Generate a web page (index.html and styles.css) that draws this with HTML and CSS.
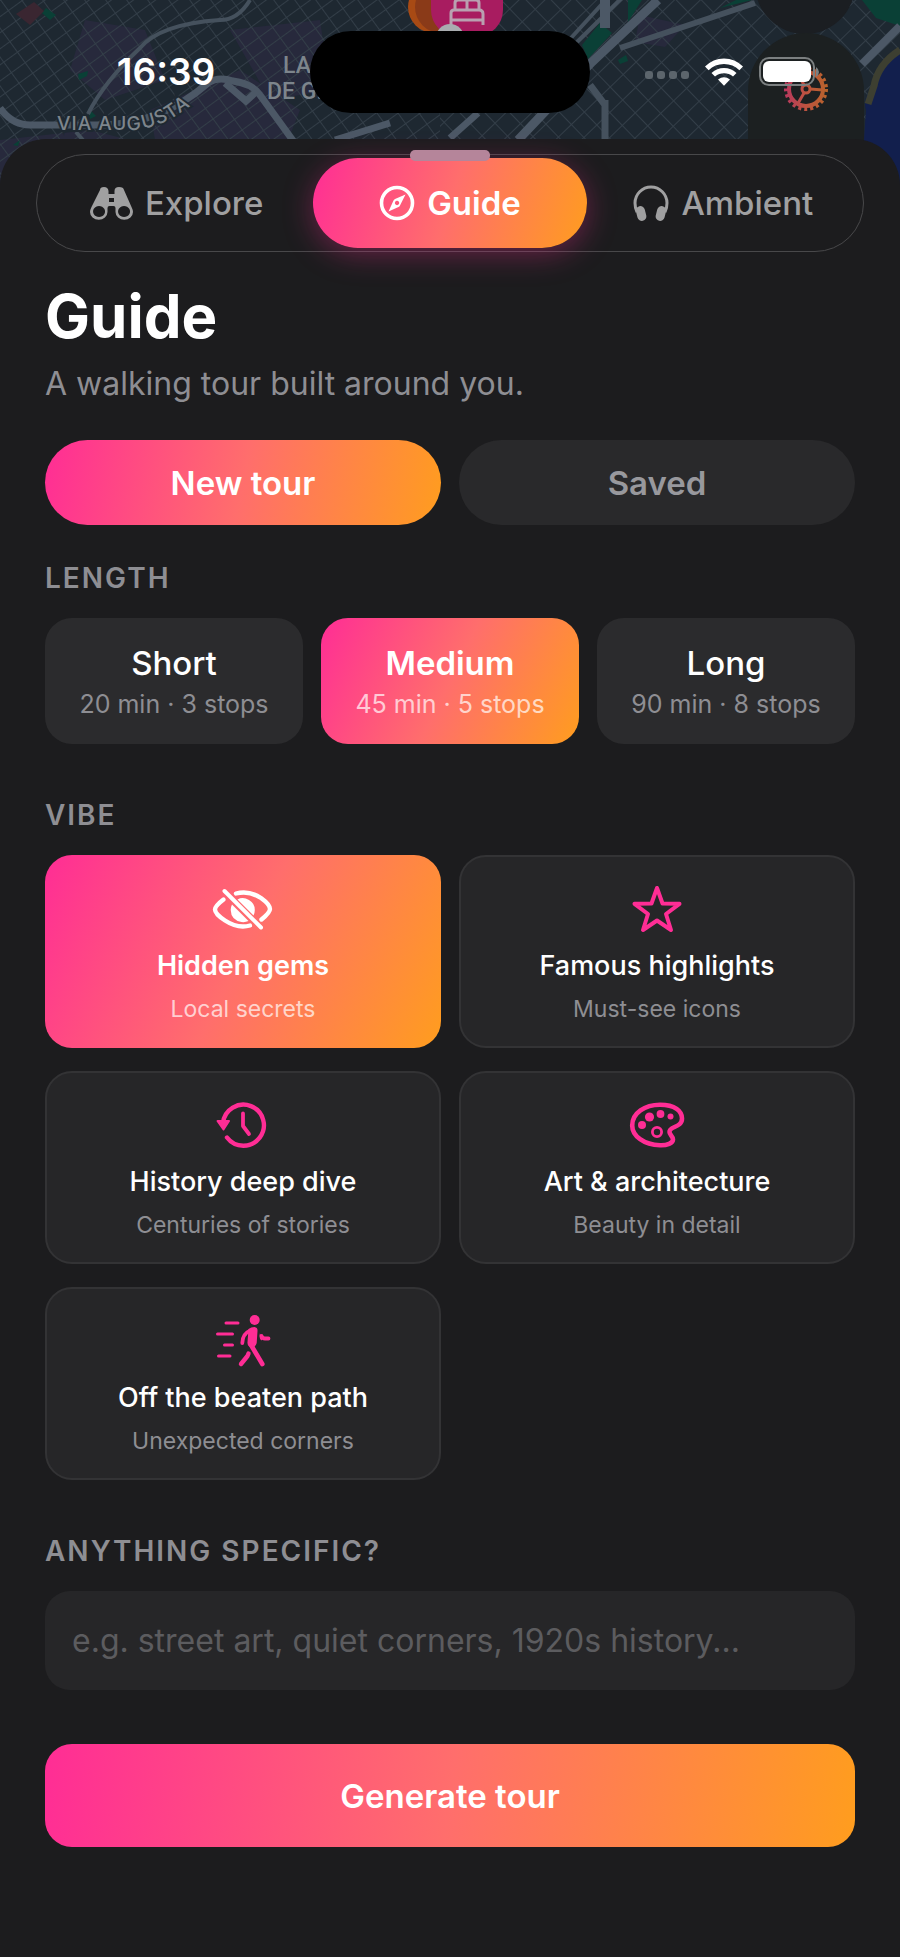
FILE: index.html
```
<!DOCTYPE html>
<html lang="en">

<head>
    <meta charset="UTF-8">
    <meta name="viewport" content="width=device-width, initial-scale=1.0">
    <title>Guide</title>
    <link rel="stylesheet" href="styles.css">
</head>

<body>
    <div class="screen">
        <!-- dimmed city map behind the sheet -->
        <svg class="map" viewBox="0 0 900 200" preserveAspectRatio="xMidYMin slice" aria-hidden="true">
            <defs>
                <pattern id="streets-left" width="17" height="13" patternUnits="userSpaceOnUse" patternTransform="rotate(-36)">
                    <path d="M0 0H17M0 0V13" stroke="#333e48" stroke-width="2" fill="none" />
                </pattern>
                <pattern id="streets-right" width="18" height="18" patternUnits="userSpaceOnUse" patternTransform="rotate(-44)">
                    <path d="M0 0H18M0 0V18" stroke="#333e48" stroke-width="2" fill="none" />
                </pattern>
                <linearGradient id="gear-fill" gradientUnits="userSpaceOnUse" x1="784" y1="0" x2="828" y2="0">
                    <stop offset="0" stop-color="#b8375f" />
                    <stop offset="0.5" stop-color="#bd5340" />
                    <stop offset="1" stop-color="#b8632a" />
                </linearGradient>
            </defs>
            <rect width="900" height="200" fill="#1e2831" />
            <g fill="#2b2a42" opacity="0.7">
                <path d="M85 20l60 10 20 50-60 20-35-30z" />
                <path d="M150 110l90-40 60 40-20 50-120 10z" />
                <path d="M230 30l90-10 10 70-60 10z" />
                <path d="M0 140l90-10 80 20-30 50H0z" />
                <path d="M640 15l45 10-20 22-30-5z" />
            </g>
            <rect width="440" height="200" fill="url(#streets-left)" />
            <rect x="440" width="460" height="200" fill="url(#streets-right)" />
            <g fill="#0a4036">
                <path d="M46 8l10 7-6 5-8-7z" />
                <path d="M78 74l10-3-1 5-8 4z" />
                <path d="M88 108l8 8-6 3z" />
                <path d="M13 145l7-5-2 6z" />
                <path d="M582 45l18-22 12 10-24 26z" />
                <path d="M628 0h14l-14 22z" />
                <path d="M720 8l16-8h16z" />
                <path d="M862 0h38v26l-24-8z" />
                <path d="M618 60l8-5 2 6-8 3z" />
            </g>
            <path d="M16 14l18-12 10 9-14 14z" fill="#3a2631" />
            <g fill="none" stroke="#45515d" stroke-width="4">
                <path d="M250 0q-12 20-30 20-60 4-80 28-36 34-52 66" />
                <path d="M620 48L755 3" stroke-width="6" />
                <path d="M560 50L602 4M575 44L640 -20" />
                <path d="M590 85l15 20M605 100v40" stroke-width="7" />
                <path d="M76 132l12 14" />
            </g>
            <g fill="none" stroke="#4c5866" stroke-width="7">
                <path d="M0 108q12 17 30 17h70q60 0 108-42 10-7 25-2 20 3 27 14l34 47" />
                <path d="M225 83l21 18 11-10" />
                <path d="M605 0v28" stroke-width="10" />
                <path d="M658 0L592 62 518 140" stroke-width="9" />
                <path d="M335 140l55-17" />
                <path d="M450 138l28-25" />
                <path d="M862 64l38-38" stroke-width="8" />
            </g>
            <path d="M900 50q-22 14-26 36-12 12-8 24l-6 90h40z" fill="#121f4d" />
            <path d="M900 50q-22 14-26 36l-6 18" fill="none" stroke="#3d3f31" stroke-width="7" />
            <circle cx="805" cy="-16" r="50" fill="#1b1e22" />
            <rect x="748" y="33" width="116" height="180" rx="58" fill="#1c2021" />
            <g fill="none" stroke="url(#gear-fill)">
                <circle cx="806" cy="89" r="17" stroke-width="4" />
                <circle cx="806" cy="89" r="20" stroke-width="4" stroke-dasharray="3 3" />
                <circle cx="806" cy="89" r="4" stroke-width="3" />
                <path d="M810 89l13 1M804 93l-7 12M804 85l-6-11" stroke-width="3" />
            </g>
            <circle cx="434" cy="7" r="26" fill="#a84a14" />
            <circle cx="441" cy="7" r="26" fill="#8a3a18" />
            <rect x="431" y="-40" width="72" height="76" rx="26" fill="#a81c60" />
            <g fill="none" stroke="#b9a0b0" stroke-width="3">
                <path d="M451 25V13q0-3 3-3h25q4 0 4 4v11M451 20h32" />
                <path d="M455 9V3q0-3 3-3h18q3 0 3 3v6M467 1v8" />
            </g>
            <circle cx="450" cy="38" r="14" fill="#a9adb0" />
            <g class="map-label">
                <text x="283" y="73">LA</text>
                <text x="267" y="99">DE G.</text>
            </g>
            <path id="augusta" d="M57 130H135Q158 127 174 117L215 90" fill="none" />
            <text class="map-road"><textPath href="#augusta">VIA AUGUSTA</textPath></text>
        </svg>

        <header class="status-bar">
            <span class="time">16:39</span>
            <div class="island"></div>
            <div class="status-icons">
                <svg width="46" height="24" viewBox="0 0 46 24" fill="#5c656c" aria-hidden="true">
                    <rect x="1" y="11" width="8" height="8" rx="3" />
                    <rect x="13" y="11" width="8" height="8" rx="3" />
                    <rect x="25" y="11" width="8" height="8" rx="3" />
                    <rect x="37" y="11" width="8" height="8" rx="3" />
                </svg>
                <svg width="38" height="28" viewBox="0 0 38 28" fill="#fff" aria-label="Wi-Fi">
                    <path d="M0 8.600Q8 .5 19 .5T38 8.600L34.400 12.200Q28 6 19 6T3.600 12.200z" />
                    <path d="M6.500 15Q12 10 19 10T31.500 15L28 18.600Q24 15.300 19 15.300T10 18.600z" />
                    <path d="M13 21.500Q19 17 25 21.500L19 27.800z" />
                </svg>
                <svg width="62" height="30" viewBox="0 0 62 30" aria-label="Battery">
                    <rect x="2" y="1" width="54" height="27" rx="9" fill="none" stroke="#7b7f80" stroke-width="2" />
                    <rect x="5" y="4" width="48" height="21" rx="6" fill="#fff" />
                    <path d="M58 10q3 2 3 5t-3 5z" fill="#7b7f80" />
                </svg>
            </div>
        </header>

        <main class="sheet">
            <div class="grabber"></div>

            <nav class="tabs">
                <button class="tab" type="button">
                    <svg width="43" height="34" viewBox="0 0 43 34" aria-hidden="true">
                        <path fill="currentColor" fill-rule="evenodd" d="M10 4Q10 1 14 1t4.500 4v3h6V5Q24.500 1 29 1t5 3l7.500 17q1.500 3 1.500 5a8.500 7.500 0 0 1-17.500 0V22q0-2-2-2h-4q-2 0-2 2v4A8.500 7.500 0 0 1 0 26q0-2 1.500-5zM19 12v4h5v-4zM9 20a6 5.500 0 1 0 .1 0zM34 20a6 5.500 0 1 0 .1 0z" />
                    </svg>
                    Explore
                </button>
                <button class="tab active" type="button" aria-current="page">
                    <svg width="36" height="36" viewBox="0 0 36 36" aria-hidden="true">
                        <circle cx="18" cy="18" r="15.500" fill="none" stroke="currentColor" stroke-width="3.600" />
                        <path fill="currentColor" fill-rule="evenodd" d="M26.500 9.500L21 20.500q-.5 1-1.500 1.500L9.500 26.500 14.500 15.500q.5-1 1.500-1.500zM18 15.800a2.200 2.200 0 1 0 .1 0z" />
                    </svg>
                    Guide
                </button>
                <button class="tab" type="button">
                    <svg width="36" height="36" viewBox="0 0 36 36" aria-hidden="true">
                        <path d="M4 27Q2 23 2 18a16 16 0 0 1 32 0q0 5-2 9" fill="none" stroke="currentColor" stroke-width="3" />
                        <rect x="3.500" y="21" width="9" height="15" rx="4.500" fill="currentColor" transform="rotate(-14 8 28)" />
                        <rect x="23.500" y="21" width="9" height="15" rx="4.500" fill="currentColor" transform="rotate(14 28 28)" />
                    </svg>
                    Ambient
                </button>
            </nav>

            <div class="content">
                <h1>Guide</h1>
                <p class="subtitle">A walking tour built around you.</p>

                <div class="switch">
                    <button class="switch-button active" type="button">New tour</button>
                    <button class="switch-button" type="button">Saved</button>
                </div>

                <h2 class="label">LENGTH</h2>
                <div class="lengths">
                    <button class="length" type="button">
                        <span class="length-name">Short</span>
                        <span class="length-info">20 min · 3 stops</span>
                    </button>
                    <button class="length active" type="button">
                        <span class="length-name">Medium</span>
                        <span class="length-info">45 min · 5 stops</span>
                    </button>
                    <button class="length" type="button">
                        <span class="length-name">Long</span>
                        <span class="length-info">90 min · 8 stops</span>
                    </button>
                </div>

                <h2 class="label section">VIBE</h2>
                <div class="vibes">
                    <button class="vibe active" type="button">
                        <svg class="vibe-icon" viewBox="0 0 60 50" aria-hidden="true">
                            <g fill="none" stroke="currentColor" stroke-width="4.400" stroke-linecap="round">
                                <path d="M10.500 15.500Q2 22 2 25.500 2 30 12 36.500 25 45 37 41.500" />
                                <path d="M23 9.500Q36 6 48 14 57 20.500 57 25 57 28.500 48.500 35.500" />
                                <path d="M11.500 7L48 43.500" stroke-width="4" />
                            </g>
                            <path fill="currentColor" d="M19 20.500L35.500 37Q32 38.600 28.500 38 18 36 17.700 26 17.700 23 19 20.500zM24.500 15.500Q30 12.500 36 16 42 19.500 41.800 26 41.800 29 40.500 31.500z" />
                        </svg>
                        <span class="vibe-name">Hidden gems</span>
                        <span class="vibe-info">Local secrets</span>
                    </button>
                    <button class="vibe" type="button">
                        <svg class="vibe-icon" viewBox="0 0 60 50" aria-hidden="true">
                            <path d="M30 4l5.500 15.500 17 .3-13.500 10.200 5 16L30 36.500 16 46l5-16L7.500 19.800l17-.3z" fill="none" stroke="currentColor" stroke-width="4" stroke-linejoin="round" />
                        </svg>
                        <span class="vibe-name">Famous highlights</span>
                        <span class="vibe-info">Must-see icons</span>
                    </button>
                    <button class="vibe" type="button">
                        <svg class="vibe-icon" viewBox="0 0 60 50" aria-hidden="true">
                            <g fill="none" stroke="currentColor" stroke-width="4.400" stroke-linecap="round" stroke-linejoin="round">
                                <path d="M10 23A20.500 20.500 0 1 1 14 37.500" />
                                <path d="M30 13.500V26l6 8" stroke-width="3.800" />
                            </g>
                            <path d="M4.500 21h11.500l-5.500 8.500z" fill="currentColor" stroke="currentColor" stroke-width="2" stroke-linejoin="round" />
                        </svg>
                        <span class="vibe-name">History deep dive</span>
                        <span class="vibe-info">Centuries of stories</span>
                    </button>
                    <button class="vibe" type="button">
                        <svg class="vibe-icon" viewBox="0 0 60 50" aria-hidden="true">
                            <path d="M33 4.800C48 4.800 55 11 55 18.500 55 28 42 26 42.500 32 42.500 35 46 36 46 39.500 46 43 40 45.500 33 45.200 17 45 5.200 36 5.200 25.500 5.200 13 18 4.800 33 4.800z" fill="none" stroke="currentColor" stroke-width="4.600" />
                            <g fill="currentColor">
                                <circle cx="15" cy="25" r="4" />
                                <circle cx="22.500" cy="17" r="4.600" />
                                <circle cx="33.500" cy="14" r="3.900" />
                                <circle cx="43.500" cy="16.500" r="3" />
                            </g>
                            <circle cx="30" cy="32" r="4.600" fill="none" stroke="currentColor" stroke-width="2.800" />
                        </svg>
                        <span class="vibe-name">Art &amp; architecture</span>
                        <span class="vibe-info">Beauty in detail</span>
                    </button>
                    <button class="vibe" type="button">
                        <svg class="vibe-icon" viewBox="0 0 60 50" aria-hidden="true">
                            <g fill="none" stroke="currentColor" stroke-linecap="round" stroke-linejoin="round">
                                <path d="M13 7h12M4.500 18h15M11.500 29h8M5.500 40h11.500" stroke-width="3" />
                                <path d="M36.500 15Q29.500 18 29.300 27" stroke-width="3.800" />
                                <path d="M48.500 20q1 2.500 3.500 2.500h3.500" stroke-width="3.800" />
                                <path d="M38 29l3 5 8.300 14" stroke-width="4.600" />
                                <path d="M35.500 37.500l-1 2.500-6.500 8" stroke-width="4.400" />
                            </g>
                            <path d="M35.500 13Q38 11 41.500 11 44.800 11.500 44.500 15L43.700 27Q43 31 39 31.500 34 31 34.500 26z" fill="currentColor" />
                            <path d="M46.700 17.500l4 4-2 3q-2-1-2-3z" fill="currentColor" />
                            <circle cx="41.700" cy="4" r="5" fill="currentColor" />
                        </svg>
                        <span class="vibe-name">Off the beaten path</span>
                        <span class="vibe-info">Unexpected corners</span>
                    </button>
                </div>

                <label class="label section" for="specific">ANYTHING SPECIFIC?</label>
                <input class="specific" type="text" id="specific" placeholder="e.g. street art, quiet corners, 1920s history...">

                <button class="generate" type="button">Generate tour</button>
            </div>
        </main>
    </div>
</body>

</html>
```
FILE: styles.css
```
* {
    box-sizing: border-box;
}

body {
    margin: 0;
    background-color: #1c1c1e;
    color: #fff;
    font-family: Inter, "Liberation Sans", sans-serif;
}

button {
    border: none;
    margin: 0;
    padding: 0;
    background: none;
    color: inherit;
    font-family: inherit;
    cursor: pointer;
}

.screen {
    position: relative;
    min-height: 100vh;
    display: flex;
    flex-direction: column;
}

.map {
    position: absolute;
    top: 0;
    left: 0;
    width: 100%;
    height: 200px;
}

.map-label {
    fill: #7d858c;
    font-family: Roboto, sans-serif;
    font-size: 23px;
    font-weight: 500;
}

.map-road {
    fill: #7d858c;
    stroke: #1e2831;
    stroke-width: 4px;
    paint-order: stroke;
    font-size: 19px;
    font-weight: 500;
    letter-spacing: 1px;
}

.status-bar {
    position: relative;
    display: grid;
    grid-template-columns: 1fr 280px 1fr;
    align-items: center;
    padding: 31px 0 26px;
}

.time {
    padding-left: 22px;
    text-align: center;
    font-size: 37px;
    font-weight: 600;
    line-height: 44px;
}

.island {
    height: 82px;
    border-radius: 41px;
    background-color: #000;
}

.status-icons {
    display: flex;
    align-items: center;
    gap: 15px;
    padding-left: 54px;
}

.sheet {
    position: relative;
    flex: 1;
    padding: 15px 36px 110px;
    border-radius: 46px 46px 0 0;
    background-color: #1c1c1e;
}

.grabber {
    position: absolute;
    top: 11px;
    left: 50%;
    z-index: 1;
    width: 80px;
    height: 11px;
    margin-left: -40px;
    border-radius: 5px;
    background-color: #b5859a;
}

.tabs {
    display: grid;
    grid-template-columns: repeat(3, 1fr);
    padding: 3px;
    border: 1px solid #48484a;
    border-radius: 49px;
}

.tab {
    display: flex;
    align-items: center;
    justify-content: center;
    gap: 12px;
    height: 90px;
    border-radius: 45px;
    color: #a0a0a1;
    font-size: 33px;
    font-weight: 500;
}

.tab.active {
    background: linear-gradient(108deg, #ff2d95, #ff6e6c 50%, #ff9d1e);
    box-shadow: 0 6px 30px rgba(255, 45, 149, 0.35);
    color: #fff;
    font-weight: 600;
}

.content {
    padding: 27px 9px 0;
}

h1 {
    margin: 0;
    font-size: 60px;
    font-weight: 700;
    line-height: 74px;
}

.subtitle {
    margin: 11px 0 36px;
    color: #8e8e93;
    font-size: 32px;
    line-height: 40px;
}

.switch {
    display: grid;
    grid-template-columns: 1fr 1fr;
    gap: 18px;
    margin-bottom: 36px;
}

.switch-button {
    height: 85px;
    border-radius: 43px;
    background-color: #29292b;
    color: #98989d;
    font-size: 33px;
    font-weight: 600;
}

.switch-button.active {
    background: linear-gradient(102deg, #ff2d95, #ff6e6c 50%, #ff9d1e);
    color: #fff;
}

.label {
    display: block;
    margin: 0 0 23px;
    color: #8e8e93;
    font-size: 28px;
    font-weight: 600;
    line-height: 34px;
    letter-spacing: 2px;
}

.label.section {
    margin-top: 54px;
}

.lengths {
    display: grid;
    grid-template-columns: repeat(3, 1fr);
    gap: 18px;
}

.length {
    display: flex;
    flex-direction: column;
    align-items: center;
    gap: 6px;
    padding: 25px 0;
    border-radius: 27px;
    background-color: #2b2b2d;
}

.length-name {
    font-size: 33px;
    font-weight: 500;
    line-height: 40px;
}

.length-info {
    color: #8e8e93;
    font-size: 25px;
    line-height: 30px;
}

.vibes {
    display: grid;
    grid-template-columns: 1fr 1fr;
    gap: 23px 18px;
}

.vibe {
    display: flex;
    flex-direction: column;
    align-items: center;
    padding: 27px 0 23px;
    border: 2px solid #333335;
    border-radius: 27px;
    background-color: #262628;
}

.vibe-icon {
    width: 60px;
    height: 50px;
    margin-bottom: 15px;
    overflow: visible;
    color: #ff2d95;
}

.vibe-name {
    margin-bottom: 12px;
    font-size: 27px;
    font-weight: 500;
    line-height: 34px;
}

.vibe-info {
    color: #8e8e93;
    font-size: 23px;
    line-height: 28px;
}

.length.active,
.vibe.active {
    background: linear-gradient(116deg, #ff2d95, #ff6e6c 50%, #ff9d1e) border-box;
    border-color: transparent;
}

.length.active .length-name,
.vibe.active .vibe-name {
    font-weight: 600;
}

.length.active .length-info,
.vibe.active .vibe-info {
    color: rgba(255, 255, 255, 0.7);
}

.vibe.active .vibe-icon {
    color: #fff;
}

.specific {
    display: block;
    width: 100%;
    height: 99px;
    padding: 0 27px;
    border: none;
    border-radius: 25px;
    background-color: #262628;
    color: #fff;
    font-family: inherit;
    font-size: 32px;
}

.specific::placeholder {
    color: #5c5c5f;
}

.generate {
    width: 100%;
    height: 103px;
    margin-top: 54px;
    border-radius: 27px;
    background: linear-gradient(97deg, #ff2d95, #ff6e6c 50%, #ff9d1e);
    font-size: 33px;
    font-weight: 600;
}
```
